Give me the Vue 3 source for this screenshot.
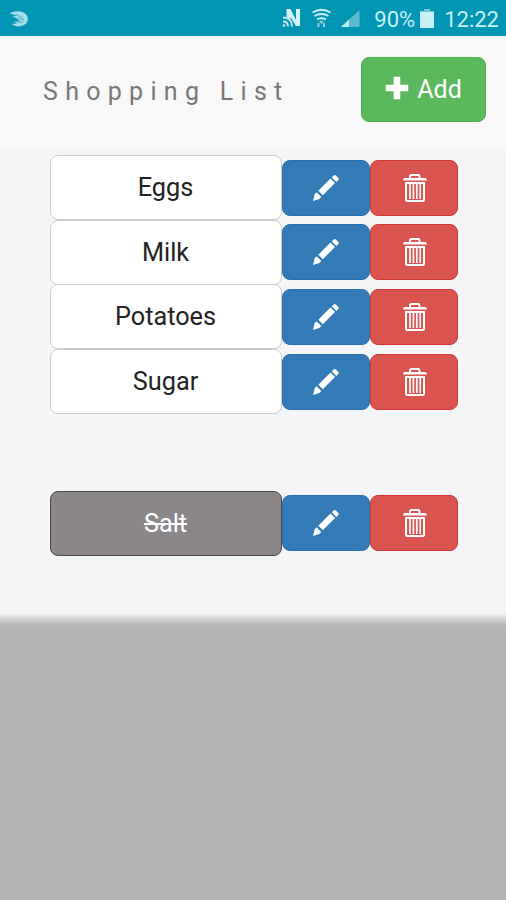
<script setup>
import { ref } from 'vue'

const groups = ref([
  { id: 'open', done: false, items: ['Eggs', 'Milk', 'Potatoes', 'Sugar'] },
  { id: 'done', done: true, items: ['Salt'] },
])
</script>

<template>
  <div class="screen">
    <div class="status">
      <svg class="swift" width="22" height="18" viewBox="0 0 22 18" aria-hidden="true">
        <path d="M2 3C8 0 19 0 20 8.500C20 15 12 18 6 15.500L3.500 14L9 13.500L6 11.500L12 11.500L9 8.500L4 6.500L9 6L1 3Z" fill="#a4dce8" />
        <path d="M8 4.500L15 8M10 8L16 10M10 12L15 12" stroke="#35a9c0" stroke-width=".8" fill="none" />
      </svg>
      <svg class="signals" width="80" height="22" viewBox="0 0 80 22" aria-hidden="true">
        <path d="M4.500 9V1H8.500L14 12V1H18V18H14L8.500 9V11Z" fill="#d6f3f8" />
        <path d="M1 9.500Q10 9.500 10 18.500M1 13.500Q6 13.500 6 18.500" stroke="#c4edf4" stroke-width="1.800" fill="none" />
        <circle cx="2" cy="17.500" r="1.300" fill="#c4edf4" />
        <g stroke="#c4edf4" stroke-width="2" fill="none">
          <path d="M30.500 4.500Q39.500-1 48.500 4.500M32.500 8Q39.500 4 46.500 8M35 11.500Q39.500 9 44 11.500" />
        </g>
        <path d="M37 13h5l-2.500 3zM35.500 15h2v4h-2zM41 15h2v4h-2z" fill="#8fd2df" />
        <path d="M59 19L77.500 2V19Z" fill="#5bbbce" />
        <path d="M59 19L67 11.500V19Z" fill="#c4edf4" />
      </svg>
      <span class="percent">90%</span>
      <svg class="battery" width="16" height="21" viewBox="0 0 16 21" aria-hidden="true">
        <path d="M1 3H5V1H11V3H15V20H1Z" fill="#c9eff6" />
        <path d="M1 3H5V1H11V3H15V4H1Z" fill="#72c6d6" />
      </svg>
      <span class="clock">12:22</span>
    </div>

    <header class="navbar">
      <h1 class="title">Shopping List</h1>
      <button class="add">
        <svg width="24" height="24" viewBox="0 0 24 24" aria-hidden="true">
          <path d="M9 1h6v8h8v6h-8v8H9v-8H1V9h8z" fill="#fff" stroke="#fff" stroke-width=".6" stroke-linejoin="round" />
        </svg>
        <span>Add</span>
      </button>
    </header>

    <main class="lists">
      <ul v-for="group in groups" :key="group.id" class="list">
        <li v-for="item in group.items" :key="item" class="row">
          <button class="name" :class="{ done: group.done }">{{ item }}</button>
          <button class="action edit" aria-label="Edit">
            <svg width="28" height="28" viewBox="0 0 28 28" aria-hidden="true">
              <path d="M19.800 3.200L22 1.200Q23 .5 24 1.500L26.300 3.900Q27.200 5 26.300 6L24.300 8Z" fill="#fff" />
              <path d="M18.500 4.500L23 9L10.800 21.200L6.300 16.700Z" fill="#fff" />
              <path d="M4.600 18.300L9.300 23L7.300 25L1 27L2.700 20.300Z" fill="#fff" />
            </svg>
          </button>
          <button class="action remove" aria-label="Remove">
            <svg width="26" height="30" viewBox="0 0 26 30" aria-hidden="true">
              <path d="M8 5.500V3.500Q8 2 9.500 2H16Q17.500 2 17.500 3.500V5.500" stroke="#fff" stroke-width="2" fill="none" />
              <path d="M2.500 5H23Q25 5 25 7.500H1Q1 5 2.500 5Z" fill="#fff" />
              <path d="M4 10H22V26.500Q22 28 20.500 28H5.500Q4 28 4 26.500Z" stroke="#fff" stroke-width="2" fill="none" />
              <path d="M8 11V26M11.400 11V26M14.800 11V26M18.200 11V26" stroke="#fff" stroke-width="1.700" fill="none" />
            </svg>
          </button>
        </li>
      </ul>
    </main>

    <div class="backdrop"></div>
  </div>
</template>

<style>
body {
  margin: 0;
}
</style>

<style scoped>
.screen {
  display: flex;
  flex-direction: column;
  height: 900px;
  overflow: hidden;
  background: #f4f5f7;
  font-family: Roboto, "Liberation Sans", sans-serif;
}

.status {
  box-sizing: border-box;
  display: flex;
  align-items: center;
  flex: 0 0 36px;
  padding: 2px 7px 0 8px;
  background: #0095b3;
  color: #c9eff6;
  font-size: 22px;
}

.signals {
  margin-left: auto;
}

.percent {
  margin-left: 12px;
}

.battery {
  margin: 0 0 2px 4px;
}

.clock {
  margin-left: 9px;
}

.navbar {
  box-sizing: border-box;
  display: flex;
  align-items: flex-start;
  justify-content: space-between;
  flex: 0 0 114px;
  padding: 21px 20px 0 43px;
  background: #f8f8f8;
}

.title {
  margin: 0;
  padding-top: 20px;
  color: #777;
  font-size: 25px;
  font-weight: 400;
  line-height: 30px;
  letter-spacing: 7.300px;
  white-space: nowrap;
}

button {
  box-sizing: border-box;
  display: flex;
  align-items: center;
  justify-content: center;
  margin: 0;
  padding: 0;
  border: 1px solid;
  border-radius: 8px;
  font: inherit;
}

.add {
  gap: 8px;
  width: 125px;
  height: 65px;
  border-color: #4cae4c;
  background: #5cb85c;
  color: #fff;
  font-size: 25px;
}

.add svg {
  margin-bottom: 4px;
}

.lists {
  display: flex;
  flex-direction: column;
  flex: 0 0 463px;
  gap: 77px;
  box-sizing: border-box;
  padding: 5px 48px 0 50px;
}

.list {
  margin: 0;
  padding: 0;
  list-style: none;
}

.row {
  display: flex;
  align-items: center;
  height: 64.700px;
}

.name {
  width: 232px;
  height: 65px;
  padding-right: 1px;
  border-color: #ccc;
  background: #fff;
  color: #222;
  font-size: 25.300px;
}

.name.done {
  border-color: #4b494b;
  background: #8a868a;
  color: #fff;
  text-decoration: line-through;
}

.action {
  width: 88px;
  height: 56px;
  margin-top: .5px;
}

.edit {
  padding-right: 1px;
  border-color: #2a70b0;
  background: #337ab7;
}

.remove {
  padding-left: 2px;
  border-color: #d03634;
  background: #d9534f;
}

/* Page shadow fading into the grey area below */
.backdrop {
  flex: 1;
  background: linear-gradient(#f4f5f7, #e2e3e4 3px, #bababc 11px, #b5b5b7 14px);
}
</style>
